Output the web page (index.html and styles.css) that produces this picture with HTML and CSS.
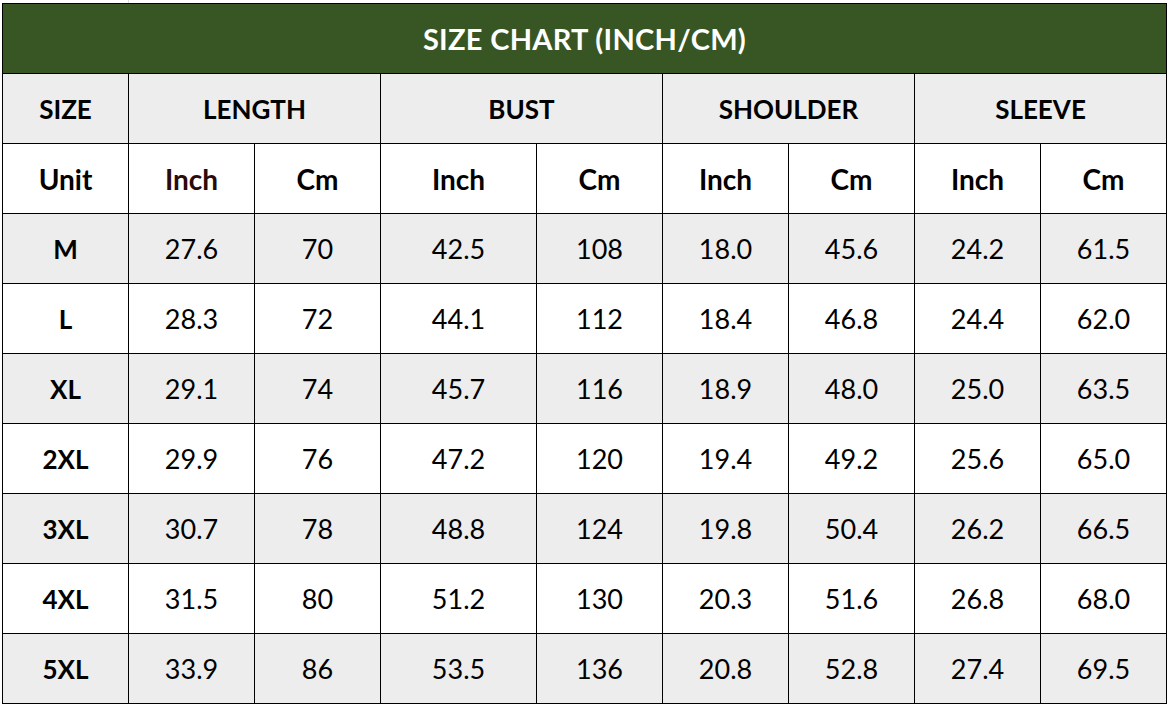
FILE: index.html
```html
<!DOCTYPE html>
<html lang="en">
<head>
<meta charset="utf-8">
<title>Size Chart</title>
<link rel="stylesheet" href="styles.css">
</head>
<body>
<div class="sheet">
  <div class="chart">
    <div class="cell title">SIZE CHART (INCH/CM)</div>

    <div class="cell head">SIZE</div>
    <div class="cell head span2">LENGTH</div>
    <div class="cell head span2">BUST</div>
    <div class="cell head span2">SHOULDER</div>
    <div class="cell head span2">SLEEVE</div>

    <div class="cell unit">Unit</div>
    <div class="cell unit accent">Inch</div>
    <div class="cell unit">Cm</div>
    <div class="cell unit">Inch</div>
    <div class="cell unit">Cm</div>
    <div class="cell unit">Inch</div>
    <div class="cell unit">Cm</div>
    <div class="cell unit">Inch</div>
    <div class="cell unit">Cm</div>

    <div class="cell size alt">M</div><div class="cell alt">27.6</div><div class="cell alt">70</div><div class="cell alt">42.5</div><div class="cell alt">108</div><div class="cell alt">18.0</div><div class="cell alt">45.6</div><div class="cell alt">24.2</div><div class="cell alt">61.5</div>

    <div class="cell size">L</div><div class="cell">28.3</div><div class="cell">72</div><div class="cell">44.1</div><div class="cell">112</div><div class="cell">18.4</div><div class="cell">46.8</div><div class="cell">24.4</div><div class="cell">62.0</div>

    <div class="cell size alt">XL</div><div class="cell alt">29.1</div><div class="cell alt">74</div><div class="cell alt">45.7</div><div class="cell alt">116</div><div class="cell alt">18.9</div><div class="cell alt">48.0</div><div class="cell alt">25.0</div><div class="cell alt">63.5</div>

    <div class="cell size">2XL</div><div class="cell">29.9</div><div class="cell">76</div><div class="cell">47.2</div><div class="cell">120</div><div class="cell">19.4</div><div class="cell">49.2</div><div class="cell">25.6</div><div class="cell">65.0</div>

    <div class="cell size alt">3XL</div><div class="cell alt">30.7</div><div class="cell alt">78</div><div class="cell alt">48.8</div><div class="cell alt">124</div><div class="cell alt">19.8</div><div class="cell alt">50.4</div><div class="cell alt">26.2</div><div class="cell alt">66.5</div>

    <div class="cell size">4XL</div><div class="cell">31.5</div><div class="cell">80</div><div class="cell">51.2</div><div class="cell">130</div><div class="cell">20.3</div><div class="cell">51.6</div><div class="cell">26.8</div><div class="cell">68.0</div>

    <div class="cell size alt">5XL</div><div class="cell alt">33.9</div><div class="cell alt">86</div><div class="cell alt">53.5</div><div class="cell alt">136</div><div class="cell alt">20.8</div><div class="cell alt">52.8</div><div class="cell alt">27.4</div><div class="cell alt">69.5</div>
  </div>
</div>
</body>
</html>
```

FILE: styles.css
```css
html, body {
  margin: 0;
  padding: 0;
  background: #ffffff;
}

body {
  width: 1170px;
  height: 706px;
  overflow: hidden;
  font-family: "Lato", "Open Sans", "Liberation Sans", sans-serif;
  color: #000;
}

.sheet {
  padding: 3px 0 0 2px;
  height: 703px;
  box-sizing: border-box;
  background-image:
    linear-gradient(#dcdcdc, #dcdcdc);
  background-size: 1px 3px;
  background-position: 128px 0;
  background-repeat: no-repeat;
}

.chart {
  display: grid;
  grid-template-columns: 125px 125px 125px 155px 125px 125px 125px 125px 125px;
  grid-auto-rows: 69px;
  gap: 1px;
  padding: 1px;
  width: max-content;
  background: #000;
}

.cell {
  display: flex;
  align-items: center;
  justify-content: center;
  background: #ffffff;
  font-size: 27px;
  line-height: 1;
}

.title {
  grid-column: 1 / -1;
  background: #375623;
  color: #ffffff;
  font-weight: 700;
  font-size: 29px;
  letter-spacing: 0.3px;
}

.head {
  background: #ededed;
  font-weight: 700;
  font-size: 26px;
}

.span2 {
  grid-column: span 2;
}

.unit {
  font-weight: 700;
  font-size: 28px;
}

.accent {
  color: #2a0a0a;
}

.size {
  font-weight: 700;
  font-size: 26px;
}

.alt {
  background: #ededed;
}
```
